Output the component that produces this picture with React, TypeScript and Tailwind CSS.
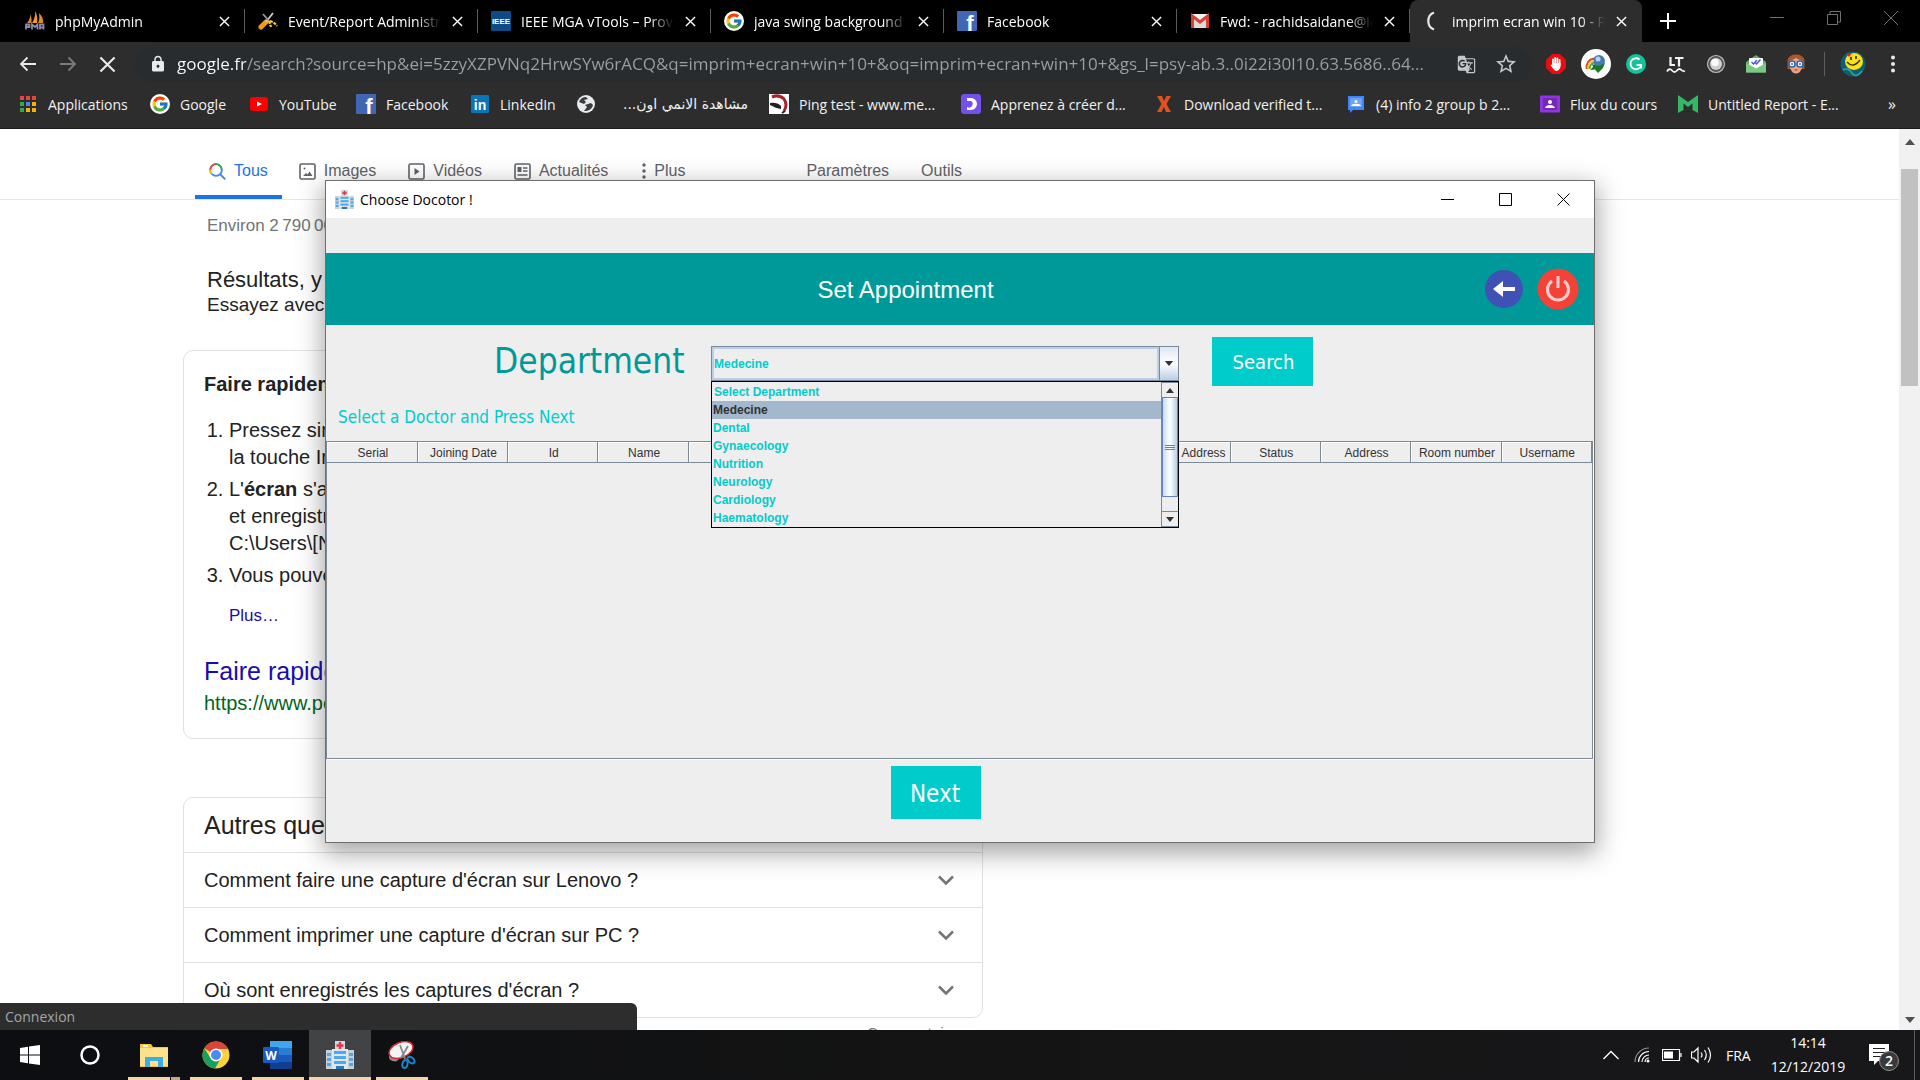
import type { ReactNode } from "react";
import { FcGoogle } from "react-icons/fc";
import { MdGTranslate, MdStarOutline, MdLock } from "react-icons/md";

type IconProps = { className?: string };

/* ---------- Site icons ---------- */

function PmaIcon() {
  return (
    <svg viewBox="0 0 20 20" className="size-5">
      <path d="M2 12 Q5 9 5.500 3 Q7 8 6.500 12Z" fill="#d98a2b" />
      <path d="M7 12 Q10 8 10.500 0 Q13 7 12 12Z" fill="#f39a2e" />
      <path d="M13 12 Q15 8 14 2 Q19 7 18 12Z" fill="#e08a25" />
      <path d="M1 18.500 V13.500 H4.500 V16 H1 M7 18.500 V13.500 L10 16 L12.500 13.500 V18.500 M15 18.500 V13.500 H18.500 V18.500 M15 16.500 H18" stroke="#8b8ab0" strokeWidth="1.800" fill="none" />
    </svg>
  );
}

function ToolsIcon() {
  return (
    <svg viewBox="0 0 20 20" className="size-5">
      <path d="M8 11 L3 16" stroke="#f49b16" strokeWidth="5" strokeLinecap="round" />
      <path d="M8 11 L15 2" stroke="#cfcfcf" strokeWidth="1.800" />
      <path d="M5 3 L11 10" stroke="#9a9a9a" strokeWidth="1.800" />
      <path d="M11 10 L13 16 M12 10 Q16 11 19 15" stroke="#f7d117" strokeWidth="2.200" fill="none" strokeDasharray="3 1" />
    </svg>
  );
}

function LetterTile({ fill, letter, size, x, y }: { fill: string; letter: string; size: number; x: number; y: number }) {
  return (
    <svg viewBox="0 0 20 20" className="size-5">
      <rect width="20" height="20" rx="1" fill={fill} />
      <text x={x} y={y} fontSize={size} fontWeight="bold" fill="#fff" textAnchor="middle" fontFamily="Liberation Sans, sans-serif">
        {letter}
      </text>
    </svg>
  );
}

const IeeeIcon = () => <LetterTile fill="#0d4a86" letter="IEEE" size={8} x={10} y={13} />;
const FacebookIcon = () => <LetterTile fill="#4267b2" letter="f" size={22} x={13} y={20} />;

function LinkedInIcon() {
  return (
    <svg viewBox="0 0 20 20" className="size-5">
      <rect x="1" y="1" width="18" height="18" rx="1" fill="#0a76b6" />
      <text x="10" y="15.500" fontSize="14" fontWeight="bold" fill="#fff" textAnchor="middle" fontFamily="Liberation Sans, sans-serif">
        in
      </text>
    </svg>
  );
}

function GmailIcon() {
  return (
    <svg viewBox="0 0 20 20" className="size-5">
      <rect x="1" y="3" width="18" height="14" rx="1" fill="#f2f2f2" />
      <path d="M4 17 V8 L10 12 L16 8 V17Z" fill="#dcdcdc" />
      <path d="M2.500 17 V5 L10 11 L17.500 5 V17" stroke="#d93f33" strokeWidth="3" fill="none" />
    </svg>
  );
}

function SpinnerIcon() {
  return (
    <svg viewBox="0 0 20 20" className="size-5">
      <path d="M12 1.500 A8.500 9 0 0 0 12 18.500" stroke="#e8e8e8" strokeWidth="2.200" fill="none" />
    </svg>
  );
}

function AppsIcon() {
  const colors = ["#e8443a", "#e8443a", "#e8443a", "#34a853", "#4285f4", "#f6b10b", "#34a853", "#f6b10b", "#f6b10b"];
  return (
    <svg viewBox="0 0 20 20" className="size-5">
      {colors.map((c, i) => (
        <rect key={i} x={2 + (i % 3) * 6} y={2 + Math.floor(i / 3) * 6} width="4" height="4" fill={c} />
      ))}
    </svg>
  );
}

function GoogleIcon() {
  return (
    <span className="flex size-5 items-center justify-center rounded-full bg-white">
      <FcGoogle className="size-[18px]" />
    </span>
  );
}

function YouTubeIcon() {
  return (
    <svg viewBox="0 0 20 20" className="size-5">
      <rect x="1" y="3" width="18" height="14" rx="3" fill="#f00" />
      <path d="M8 7.500 L13 10 L8 12.500Z" fill="#fff" />
    </svg>
  );
}

function GlobeIcon() {
  return (
    <svg viewBox="0 0 20 20" className="size-5">
      <circle cx="10" cy="10" r="9" fill="#e8eaed" />
      <path d="M10 3 Q5 3 3 8 L8 10 L10 8 L8 6 L12 5Z M8 17 L11 13 L9 11 L15 9 L17 11 Q16 16 10 17Z" fill="#3c3c3c" />
    </svg>
  );
}

function PingIcon() {
  return (
    <svg viewBox="0 0 20 20" className="size-5">
      <rect width="20" height="20" fill="#fff" />
      <path d="M3 3 Q10 0 15 5 Q19 11 15 17" stroke="#a8242c" strokeWidth="3" fill="none" />
      <path d="M1 9 Q8 8 12 12 L12 15 Q6 14 1 11Z" fill="#222" />
      <path d="M13 19 L16 17" stroke="#222" strokeWidth="2" />
    </svg>
  );
}

function MoonTileIcon() {
  return (
    <svg viewBox="0 0 20 20" className="size-5">
      <rect width="20" height="20" rx="3" fill="#7451eb" />
      <path d="M6 4 H10 A6 6 0 0 1 10 16 H6 V13 A3.500 3.500 0 0 0 10 7 H6Z" fill="#fff" />
    </svg>
  );
}

function CrossIcon() {
  return (
    <svg viewBox="0 0 20 20" className="size-5">
      <path d="M3 2 H8 L10 7 L12.500 2 H17 L12.500 10 L17 18 H12 L10 13 L7.500 18 H3 L7.500 10Z" fill="#e2501f" />
    </svg>
  );
}

function GroupsIcon() {
  return (
    <svg viewBox="0 0 20 20" className="size-5">
      <path d="M2 2 H18 V16 H7 L4 19 V16 H2Z" fill="#4285f4" />
      <rect x="4" y="4" width="12" height="9" fill="#6ba2fa" />
      <circle cx="10" cy="7.500" r="1.500" fill="#fff" />
      <path d="M5 12 H15 Q13 9 10 10 Q7 9 5 12Z" fill="#fff" />
    </svg>
  );
}

function ClassroomIcon() {
  return (
    <svg viewBox="0 0 20 20" className="size-5">
      <rect y="1.500" width="20" height="17" rx="1" fill="#8f36e0" />
      <rect x="3" y="4" width="14" height="12" fill="#7627bb" />
      <circle cx="10" cy="8" r="2" fill="#fff" />
      <path d="M5 14 Q6 11 10 11 Q14 11 15 14Z" fill="#fff" />
    </svg>
  );
}

function GreenMIcon() {
  return (
    <svg viewBox="0 0 20 20" className="size-5">
      <path d="M0 1 L10 8 L20 1 V19 L14.500 16 V9.500 L10 13 L5.500 9.500 V16 L0 19Z" fill="#35b765" />
    </svg>
  );
}

/* ---------- Extension icons ---------- */

function AdblockIcon() {
  return (
    <svg viewBox="0 0 20 20" className="size-5">
      <path d="M6 0 H14 L20 6 V14 L14 20 H6 L0 14 V6Z" fill="#e80d10" />
      <path d="M7 11 V5.500 M9.200 10 V3.800 M11.400 10 V4.300 M13.600 11 V6" stroke="#fff" strokeWidth="1.800" strokeLinecap="round" />
      <path d="M6 9 H14.500 V13 Q13 17 10 17 Q7.500 16 4.500 11 L5.500 10.500 L7 12Z" fill="#fff" />
    </svg>
  );
}

function IdmIcon() {
  return (
    <svg viewBox="0 0 30 30" className="size-[30px]">
      <circle cx="15" cy="15" r="15" fill="#fff" />
      <circle cx="18" cy="12" r="6" fill="#4879b8" />
      <circle cx="17" cy="10" r="2.500" fill="#b9d3ef" />
      <path d="M5.500 20 Q5 11 13 9.500" stroke="#d8452c" strokeWidth="1.800" fill="none" />
      <path d="M7 20 Q7 13 13 11.500" stroke="#f3c521" strokeWidth="1.800" fill="none" />
      <path d="M8.500 20 Q9 15 13 13.500" stroke="#4aa53a" strokeWidth="1.800" fill="none" />
      <path d="M11 15 L18 17 L24 14 L22 19 L17 24 L14 20.500 L9 21 L12 18Z" fill="#1c7a20" />
    </svg>
  );
}

function GrammarlyIcon() {
  return (
    <svg viewBox="0 0 20 20" className="size-5">
      <circle cx="10" cy="10" r="10" fill="#15c39a" />
      <path d="M13.500 5.500 A5.500 5.500 0 1 0 15 12 M10.500 11 H15 V14.500" stroke="#fff" strokeWidth="1.800" fill="none" />
    </svg>
  );
}

function LanguageToolIcon() {
  return (
    <svg viewBox="0 0 20 20" className="size-5">
      <path d="M4.500 3 V11 H9 M9 4 H17.500 M13 4 V12.500" stroke="#f3f3f3" strokeWidth="2.200" fill="none" />
      <path d="M1 17.500 Q3.500 13.500 6 16.500 T11 16.500 T16 16.500 L19 17.500" stroke="#f3f3f3" strokeWidth="1.800" fill="none" />
    </svg>
  );
}

function OrbIcon() {
  return (
    <svg viewBox="0 0 20 20" className="size-5">
      <circle cx="10" cy="10" r="8.500" fill="#555" stroke="#bbb" strokeWidth="1.200" />
      <circle cx="10" cy="10" r="6" fill="#cfcfcf" />
      <circle cx="9" cy="8.500" r="3.800" fill="#fafafa" />
    </svg>
  );
}

function MailTrackIcon() {
  return (
    <svg viewBox="0 0 20 20" className="size-5">
      <path d="M0 8 L10 1 L20 8 V18.500 H0Z" fill="#57b560" />
      <rect x="3" y="4" width="14" height="11" rx="1" fill="#fff" />
      <path d="M0 9 L10 14.500 L20 9 V17.500 Q20 18.500 19 18.500 H1 Q0 18.500 0 17.500Z" fill="#7cc983" />
      <path d="M5.500 8 L7.500 10 L11 6 M9.500 9 L10.500 10 L14.500 5.500" stroke="#4a4fd0" strokeWidth="1.400" fill="none" />
    </svg>
  );
}

function GlassesIcon() {
  return (
    <svg viewBox="0 0 20 20" className="size-5">
      <path d="M1.500 15 V6 Q3 0.500 10 0.500 Q17 0.500 18.500 6 V15Z" fill="#a9572b" />
      <path d="M4 7 L10 4 L16 7 V14 Q14 19.500 10 19.500 Q6 19.500 4 14Z" fill="#eba182" />
      <circle cx="6" cy="10" r="3" fill="#fff" stroke="#2a67b5" strokeWidth="1.600" />
      <circle cx="14" cy="10" r="3" fill="#fff" stroke="#2a67b5" strokeWidth="1.600" />
      <circle cx="6" cy="10" r="1" fill="#2a67b5" />
      <circle cx="14" cy="10" r="1" fill="#2a67b5" />
      <path d="M8.500 16 H11.500" stroke="#b4413b" strokeWidth="1.200" />
    </svg>
  );
}

function AvatarIcon() {
  return (
    <svg viewBox="0 0 26 26" className="size-[26px]">
      <circle cx="13" cy="13" r="12.500" fill="#0f5f72" />
      <path d="M3 19 Q8 16 12 22 T22 20" stroke="#2fa1ad" strokeWidth="1.500" fill="none" />
      <ellipse cx="14" cy="10.500" rx="9" ry="8.500" fill="#f7e21c" />
      <path d="M6 2 L12 2 L9 6Z" fill="#c7291e" />
      <path d="M11 6 V9 M16 5 V8" stroke="#3a2a00" strokeWidth="1.600" />
      <path d="M7 11 Q13 18 20 9" stroke="#3a2a00" strokeWidth="1.300" fill="none" />
    </svg>
  );
}

/* ---------- Generic glyphs ---------- */

function Cross({ className }: IconProps) {
  return (
    <svg viewBox="0 0 12 12" className={className}>
      <path d="M1 1 L11 11 M11 1 L1 11" stroke="currentColor" strokeWidth="1.500" />
    </svg>
  );
}

function Arrow({ className }: IconProps) {
  return (
    <svg viewBox="0 0 18 16" className={className}>
      <path d="M17 8 H2 M8.500 1.500 L2 8 L8.500 14.500" stroke="currentColor" strokeWidth="1.800" fill="none" />
    </svg>
  );
}

function Triangle({ up, className }: { up?: boolean; className?: string }) {
  return (
    <svg viewBox="0 0 10 6" className={className}>
      <path d={up ? "M0 6 L5 0 L10 6Z" : "M0 0 H10 L5 6Z"} fill="currentColor" />
    </svg>
  );
}

function HospitalIcon({ className }: IconProps) {
  return (
    <svg viewBox="0 0 28 28" className={className}>
      <rect x="9" y="0" width="10" height="9" fill="#cfd8dc" />
      <path d="M14 1 V8 M10.500 4.500 H17.500" stroke="#e5344a" strokeWidth="2.400" />
      <rect x="0" y="9" width="28" height="19" fill="#c8d0d5" />
      <rect x="6" y="8" width="16" height="20" fill="#dfe6ea" />
      <g fill="#4fa8ec">
        <rect x="8" y="10" width="12" height="3" />
        <rect x="8" y="15" width="12" height="3" />
        <rect x="8" y="20" width="12" height="3" />
        <rect x="1" y="12" width="4" height="3" />
        <rect x="1" y="17" width="4" height="3" />
        <rect x="1" y="22" width="4" height="3" />
        <rect x="23" y="12" width="4" height="3" />
        <rect x="23" y="17" width="4" height="3" />
        <rect x="23" y="22" width="4" height="3" />
      </g>
      <rect x="10" y="25" width="8" height="3" fill="#2a7ab8" />
    </svg>
  );
}

/* ---------- Browser chrome ---------- */

const tabs: { title: string; icon: ReactNode; active?: boolean }[] = [
  { title: "phpMyAdmin", icon: <PmaIcon /> },
  { title: "Event/Report Administration", icon: <ToolsIcon /> },
  { title: "IEEE MGA vTools – Providing", icon: <IeeeIcon /> },
  { title: "java swing background image", icon: <GoogleIcon /> },
  { title: "Facebook", icon: <FacebookIcon /> },
  { title: "Fwd: - rachidsaidane@ieee.org", icon: <GmailIcon /> },
  { title: "imprim ecran win 10 - Recherche", icon: <SpinnerIcon />, active: true },
];

function TabStrip() {
  return (
    <div className="flex h-[42px] bg-black pl-3 text-white">
      {tabs.map((t) => (
        <div
          key={t.title}
          className={
            t.active
              ? "flex w-[232px] items-center rounded-t-lg bg-[#2d2d2d] px-3"
              : "flex w-[233px] items-center pl-[13px]"
          }
        >
          <span className="shrink-0">{t.icon}</span>
          <span className="ml-2.5 w-[156px] overflow-hidden whitespace-nowrap text-[14px] [mask-image:linear-gradient(to_right,#000_82%,transparent_98%)]">
            {t.title}
          </span>
          <button aria-label="Close tab" className="ml-2 shrink-0">
            <Cross className="size-[11px]" />
          </button>
          {!t.active && <span className="ml-auto h-6 w-px bg-[#5a5a5a]" />}
        </div>
      ))}
      <button aria-label="New tab" className="ml-[18px] flex items-center">
        <svg viewBox="0 0 16 16" className="size-4">
          <path d="M8 0 V16 M0 8 H16" stroke="#fff" strokeWidth="2" />
        </svg>
      </button>
      <div className="ml-auto flex items-start gap-[43px] pr-[22px] pt-[11px] text-[#707070]">
        <button aria-label="Minimize">
          <svg viewBox="0 0 14 14" className="size-3.5"><path d="M0 6.500 H14" stroke="currentColor" /></svg>
        </button>
        <button aria-label="Restore">
          <svg viewBox="0 0 14 14" className="size-3.5" fill="none" stroke="currentColor">
            <path d="M0.500 3.500 H10.500 V13.500 H0.500Z M3 3 V0.500 H13.500 V11 H11" />
          </svg>
        </button>
        <button aria-label="Close">
          <svg viewBox="0 0 14 14" className="size-3.5"><path d="M0 0 L14 14 M14 0 L0 14" stroke="currentColor" /></svg>
        </button>
      </div>
    </div>
  );
}

const extensions: { name: string; icon: ReactNode }[] = [
  { name: "AdBlock", icon: <AdblockIcon /> },
  { name: "Download manager", icon: <IdmIcon /> },
  { name: "Grammar", icon: <GrammarlyIcon /> },
  { name: "Language tool", icon: <LanguageToolIcon /> },
  { name: "Orb", icon: <OrbIcon /> },
  { name: "Mail tracker", icon: <MailTrackIcon /> },
  { name: "Reader", icon: <GlassesIcon /> },
];

const url =
  "google.fr/search?source=hp&ei=5zzyXZPVNq2HrwSYw6rACQ&q=imprim+ecran+win+10+&oq=imprim+ecran+win+10+&gs_l=psy-ab.3..0i22i30l10.63.5686..64...";

function Toolbar() {
  return (
    <div className="flex h-[44px] items-center bg-[#2d2d2d] pl-[19px] pr-[25px] text-[#e8eaed]">
      <button aria-label="Back"><Arrow className="h-4 w-[18px]" /></button>
      <button aria-label="Forward" className="ml-[22px] text-[#7b7b7b]"><Arrow className="h-4 w-[18px] rotate-180" /></button>
      <button aria-label="Stop" className="ml-[22px]"><Cross className="size-[17px]" /></button>
      <div className="ml-[19px] flex h-[35px] flex-1 items-center rounded-full bg-[#282c2f] pl-3.5 pr-3.5">
        <MdLock className="size-[18px] shrink-0" />
        {/* The host is white, the rest of the address grey. */}
        <input
          type="text"
          aria-label="Address"
          defaultValue={url}
          className="ml-2.5 min-w-0 flex-1 bg-[linear-gradient(to_right,#fff_69px,#9aa0a6_69px)] bg-clip-text text-[17px] leading-6 text-transparent outline-none"
        />
        <button aria-label="Translate" className="text-[#c4c7ca]"><MdGTranslate className="size-[19px]" /></button>
        <button aria-label="Bookmark" className="ml-[18px] text-[#c4c7ca]"><MdStarOutline className="size-6" /></button>
      </div>
      <div className="ml-1 flex">
        {extensions.map((e) => (
          <button key={e.name} aria-label={e.name} className="flex w-10 items-center justify-center">
            {e.icon}
          </button>
        ))}
      </div>
      <span className="ml-2 h-6 w-px bg-[#5f5f5f]" />
      <button aria-label="Profile" className="ml-[15px]"><AvatarIcon /></button>
      <button aria-label="Menu" className="ml-[25px]">
        <svg viewBox="0 0 4 18" className="h-[18px] w-1" fill="#e8eaed">
          <circle cx="2" cy="2.500" r="2" /><circle cx="2" cy="9" r="2" /><circle cx="2" cy="15.500" r="2" />
        </svg>
      </button>
    </div>
  );
}

const bookmarks: { label: string; icon: ReactNode; width: string; rtl?: boolean }[] = [
  { label: "Applications", icon: <AppsIcon />, width: "w-[132px]" },
  { label: "Google", icon: <GoogleIcon />, width: "w-[99px]" },
  { label: "YouTube", icon: <YouTubeIcon />, width: "w-[107px]" },
  { label: "Facebook", icon: <FacebookIcon />, width: "w-[114px]" },
  { label: "LinkedIn", icon: <LinkedInIcon />, width: "w-[106px]" },
  { label: "مشاهدة الانمي اون...", icon: <GlobeIcon />, width: "w-[193px]", rtl: true },
  { label: "Ping test - www.me...", icon: <PingIcon />, width: "w-[192px]" },
  { label: "Apprenez à créer d...", icon: <MoonTileIcon />, width: "w-[193px]" },
  { label: "Download verified t...", icon: <CrossIcon />, width: "w-[192px]" },
  { label: "(4) info 2 group b 2...", icon: <GroupsIcon />, width: "w-[194px]" },
  { label: "Flux du cours", icon: <ClassroomIcon />, width: "w-[138px]" },
  { label: "Untitled Report - E...", icon: <GreenMIcon />, width: "w-[170px]" },
];

function BookmarkBar() {
  return (
    <div className="flex h-[43px] items-center border-b border-[#1c1c1c] bg-[#2d2d2d] pb-1.5 pl-[18px] pr-6 text-[14px] text-[#f1f1f1]">
      {bookmarks.map((b) => (
        <a key={b.label} href="#" className={`flex shrink-0 items-center gap-2.5 whitespace-nowrap ${b.width}`}>
          <span className="shrink-0">{b.icon}</span>
          {b.rtl ? (
            <span dir="rtl" className="ml-auto pr-[21px] font-['DejaVu_Sans',sans-serif]">{b.label}</span>
          ) : (
            <span>{b.label}</span>
          )}
        </a>
      ))}
      <button aria-label="More bookmarks" className="ml-auto text-[16px]">»</button>
    </div>
  );
}

/* ---------- Search page ---------- */

function NavLink({ label, icon }: { label: string; icon: ReactNode }) {
  return (
    <a href="#" className="flex items-center gap-2 px-4 pb-4">
      {icon}
      <span>{label}</span>
    </a>
  );
}

function SearchNav() {
  return (
    <nav className="flex items-end border-b border-[#e6e6e6] pl-[195px] pt-[30px] text-[16px] leading-6 text-[#5f6368]">
      <a href="#" className="mr-px flex items-center gap-2 border-b-4 border-[#1a73e8] px-3.5 pb-3 text-[#1a73e8]">
        <svg viewBox="0 0 17 17" className="size-[17px]" fill="none" strokeWidth="1.800">
          <circle cx="7" cy="7" r="5.800" stroke="#4285f4" />
          <path d="M3 11.200 A5.800 5.800 0 0 1 1.300 6" stroke="#fbbc04" />
          <path d="M1.300 6.500 A5.800 5.800 0 0 1 7 1.200" stroke="#ea4335" />
          <path d="M7 1.200 A5.800 5.800 0 0 1 12.800 7" stroke="#34a853" />
          <path d="M11 11 L16.300 16.300" stroke="#4285f4" />
        </svg>
        <span>Tous</span>
      </a>
      <NavLink
        label="Images"
        icon={
          <svg viewBox="0 0 17 17" className="size-[17px]" fill="none" stroke="#5f6368" strokeWidth="1.600">
            <rect x="1" y="1" width="15" height="15" rx="1.500" />
            <circle cx="5.500" cy="5.500" r="1" fill="#5f6368" stroke="none" />
            <path d="M4 13 L7 10 L8.500 11.500 L10.500 8.500 L13.500 13Z" fill="#5f6368" stroke="none" />
          </svg>
        }
      />
      <NavLink
        label="Vidéos"
        icon={
          <svg viewBox="0 0 17 17" className="size-[17px]">
            <rect x="1" y="1" width="15" height="15" rx="1.500" fill="none" stroke="#5f6368" strokeWidth="1.600" />
            <path d="M6.500 5 L11.500 8.500 L6.500 12Z" fill="#5f6368" />
          </svg>
        }
      />
      <NavLink
        label="Actualités"
        icon={
          <svg viewBox="0 0 17 17" className="size-[17px]">
            <rect x="1" y="1" width="15" height="15" rx="1.500" fill="none" stroke="#5f6368" strokeWidth="1.600" />
            <rect x="3.500" y="4" width="4" height="5" fill="#5f6368" />
            <path d="M9 5 H13.500 M9 8 H13.500 M3.500 12 H13.500" stroke="#5f6368" strokeWidth="1.600" />
          </svg>
        }
      />
      <a href="#" className="flex items-center gap-1.5 pb-4 pl-4">
        <svg viewBox="0 0 8 16" className="h-4 w-2" fill="#5f6368">
          <circle cx="4" cy="2" r="1.700" /><circle cx="4" cy="8" r="1.700" /><circle cx="4" cy="14" r="1.700" />
        </svg>
        <span>Plus</span>
      </a>
      <a href="#" className="ml-[121px] pb-4">Paramètres</a>
      <a href="#" className="ml-8 pb-4">Outils</a>
    </nav>
  );
}

const questions = [
  "Comment faire une capture d'écran sur Lenovo ?",
  "Comment imprimer une capture d'écran sur PC ?",
  "Où sont enregistrés les captures d'écran ?",
];

function SearchPage() {
  return (
    <div className="min-w-0 flex-1 font-['Liberation_Sans',Arial,sans-serif] text-[#222]">
      <SearchNav />
      <div className="ml-[207px] whitespace-nowrap">
        <p className="mt-3.5 text-[17px] leading-6 text-[#70757a]">Environ 2&#8239;790&#8239;000 résultats</p>
        <p className="mt-7 text-[22px] leading-[27px]">Résultats, y compris</p>
        <p className="text-[19px] leading-6">Essayez avec l'orthographe</p>
      </div>
      <section className="ml-[183px] mt-[33px] w-[800px] overflow-hidden whitespace-nowrap rounded-[10px] border border-[#dfe1e5] px-5 pb-[21px] pt-5 text-[20px] leading-[27px]">
        <h2 className="font-bold">Faire rapidement</h2>
        <ol className="ml-[25px] mt-[19px] flex list-outside list-decimal flex-col gap-[5px]">
          <li>Pressez simultanément<br />la touche Impr écran</li>
          <li>L'<b>écran</b> s'affiche<br />et enregistrez<br />C:\Users\[Nom]</li>
          <li>Vous pouvez</li>
        </ol>
        <a href="#" className="ml-[25px] mt-[15px] block text-[17px] leading-6 text-[#1a0dab]">Plus…</a>
        <a href="#" className="mt-7 block text-[25px] leading-[30px] text-[#1a0dab]">Faire rapidement</a>
        <a href="#" className="mt-1 block text-[#006621]">https://www.pc</a>
      </section>
      <section className="ml-[183px] mt-[58px] w-[800px] rounded-[10px] border border-[#dfe1e5]">
        <h2 className="flex h-[54px] items-center px-5 pt-0.5 text-[25px]">Autres questions</h2>
        {questions.map((q) => (
          <button key={q} className="flex h-[55px] w-full items-center justify-between border-t border-[#dfe1e5] pl-5 pr-7 text-[20px]">
            <span>{q}</span>
            <svg viewBox="0 0 16 10" className="h-2.5 w-4">
              <path d="M1 1.500 L8 8.500 L15 1.500" stroke="#70757a" strokeWidth="2.500" fill="none" />
            </svg>
          </button>
        ))}
      </section>
      <p className="ml-[867px] mt-[5px] text-[15px] leading-5 text-[#70757a]">Commentaires</p>
    </div>
  );
}

function PageScrollbar() {
  return (
    <div className="flex w-[21px] flex-col items-center bg-[#f1f1f1] text-[#505050]">
      <Triangle up className="mt-2.5 h-[6px] w-2.5" />
      <div className="mt-6 h-[217px] w-[17px] bg-[#c1c1c1]" />
      <Triangle className="mb-[7px] mt-auto h-[6px] w-2.5" />
    </div>
  );
}

/* ---------- Appointment window ---------- */

const departments = ["Select Department", "Medecine", "Dental", "Gynaecology", "Nutrition", "Neurology", "Cardiology", "Haematology"];

const columns = ["Serial", "Joining Date", "Id", "Name", "", "", "", "", "", "Address", "Status", "Address", "Room number", "Username"];

function DepartmentSelect() {
  return (
    <div className="relative mt-[21px] w-[468px]">
      <div className="flex h-[35px] border border-[#7a8a99] bg-[#eee]">
        <select
          id="department"
          defaultValue="Medecine"
          className="min-w-0 flex-1 appearance-none border-2 border-[#b8cfe5] text-[12px] font-bold text-[#00cccc]"
        >
          {departments.map((d) => (
            <option key={d}>{d}</option>
          ))}
        </select>
        <span className="flex w-[19px] items-center justify-center border-l border-[#7a8a99] bg-linear-to-b from-[#dde8f3] via-white to-[#b8cfe5] text-[#333]">
          <Triangle className="h-[5px] w-2.5" />
        </span>
      </div>
      <div className="absolute left-0 right-0 top-full z-10 flex border border-black bg-[#eee]">
        <ul role="listbox" aria-label="Department options" className="flex-1 text-[12px] font-bold leading-[18px] text-[#00cccc]">
          {departments.map((d) => (
            <li
              key={d}
              role="option"
              aria-selected={d === "Medecine"}
              className={d === "Medecine" ? "bg-[#a3b8cc] pl-px text-[#333]" : "pl-px first:pl-0.5 first:pt-px"}
            >
              {d}
            </li>
          ))}
        </ul>
        <div className="flex w-[17px] flex-col border-l border-t border-[#7a8a99] text-[#333]">
          <div className="flex h-[14px] items-center justify-center"><Triangle up className="h-[5px] w-2" /></div>
          <div className="flex h-[100px] flex-col items-center justify-center gap-px border border-[#6382bf] bg-linear-to-r from-[#c8dbee] via-white to-[#b8cfe5]">
            <span className="h-px w-2.5 bg-[#6382bf]" />
            <span className="h-px w-2.5 bg-[#6382bf]" />
            <span className="h-px w-2.5 bg-[#6382bf]" />
          </div>
          <div className="flex-1" />
          <div className="flex h-4 items-center justify-center border-b border-t border-[#7a8a99]"><Triangle className="h-[5px] w-2" /></div>
        </div>
      </div>
    </div>
  );
}

function AppointmentWindow() {
  return (
    <div className="absolute left-[325px] right-[325px] top-[51px] border border-[#6e6e6e] bg-[#eee] shadow-[0_8px_24px_2px_rgba(0,0,0,0.36)]">
      <header className="flex h-[37px] items-center bg-white pl-[9px] pr-6 text-black">
        <HospitalIcon className="size-[19px]" />
        <h1 className="ml-1.5 text-[14px]">Choose Docotor !</h1>
        <div className="ml-auto flex items-center gap-[45px]">
          <button aria-label="Minimize window">
            <svg viewBox="0 0 13 13" className="size-[13px]"><path d="M0 6.500 H13" stroke="#000" /></svg>
          </button>
          <button aria-label="Maximize window">
            <svg viewBox="0 0 13 13" className="size-[13px]"><path d="M0.500 0.500 H12.500 V12.500 H0.500Z" stroke="#000" fill="none" /></svg>
          </button>
          <button aria-label="Close window">
            <svg viewBox="0 0 13 13" className="size-[13px]"><path d="M0.500 0.500 L12.500 12.500 M12.500 0.500 L0.500 12.500" stroke="#000" /></svg>
          </button>
        </div>
      </header>
      <div className="mt-[35px] flex h-[72px] items-center gap-3.5 bg-[#009999] pl-3.5 pr-[15px]">
        <h2 className="flex-1 pt-0.5 text-center font-['Liberation_Sans',Arial,sans-serif] text-[24px] text-white">Set Appointment</h2>
        <button aria-label="Back to previous screen">
          <svg viewBox="0 0 38 38" className="size-[38px]">
            <circle cx="19" cy="19" r="19" fill="#3f51b5" />
            <path d="M8 19 L18 11 V17 H30 V21 H18 V27Z" fill="#fff" />
          </svg>
        </button>
        <button aria-label="Log out">
          <svg viewBox="0 0 42 42" className="size-[42px]">
            <circle cx="21" cy="21" r="20.500" fill="#f44336" />
            <path d="M15 13 A10.500 10.500 0 1 0 27 13" stroke="#ffcdd2" strokeWidth="3" fill="none" />
            <path d="M21 8 V20" stroke="#ffcdd2" strokeWidth="3" />
          </svg>
        </button>
      </div>
      <div className="flex h-[80px] items-start font-['DejaVu_Sans_Condensed','Noto_Sans',sans-serif]">
        <label htmlFor="department" className="ml-[168px] mt-3.5 w-[217px] text-[35px] leading-[44px] text-[#009999]">Department</label>
        <div className="font-['Liberation_Sans',Arial,sans-serif]"><DepartmentSelect /></div>
        <button className="ml-[33px] mt-3 h-[49px] w-[101px] bg-[#00cccc] pl-0.5 text-[20px] text-white">Search</button>
      </div>
      <p className="ml-3 font-['DejaVu_Sans_Condensed','Noto_Sans',sans-serif] text-[17px] leading-6 text-[#00cccc]">Select a Doctor and Press Next</p>
      <div className="mr-px mt-3 h-[318px] border border-[#7a8a99] font-['Liberation_Sans',Arial,sans-serif] shadow-[1px_1px_0_#fff]">
        <table className="w-full table-fixed border-collapse text-[12px] text-[#333]">
          <thead>
            <tr className="h-5">
              {columns.map((c, i) => (
                <th
                  key={i}
                  className={
                    i === 9
                      ? "border-b border-r border-[#7a8a99] pr-1 pt-0.5 text-right font-normal shadow-[inset_1px_1px_0_#fff]"
                      : "whitespace-nowrap border-b border-r border-[#7a8a99] pl-0.5 pt-0.5 text-center font-normal shadow-[inset_1px_1px_0_#fff]"
                  }
                >
                  {c}
                </th>
              ))}
            </tr>
          </thead>
          <tbody />
        </table>
      </div>
      <div className="flex h-[83px] justify-center pr-12 pt-[7px]">
        <button className="h-[53px] w-[90px] bg-[#00cccc] pr-0.5 pt-0.5 font-['DejaVu_Sans_Condensed','Noto_Sans',sans-serif] text-[24px] text-white">Next</button>
      </div>
    </div>
  );
}

/* ---------- Taskbar ---------- */

const taskApps: { name: string; icon: ReactNode; active?: boolean; stacked?: boolean }[] = [
  {
    name: "File explorer",
    stacked: true,
    icon: (
      <svg viewBox="0 0 28 28" className="size-7">
        <path d="M0 3 H11 L13 6 H28 V26 H0Z" fill="#f8c53a" />
        <rect x="0" y="7" width="28" height="18" fill="#fde28a" />
        <rect x="3" y="4" width="5" height="2" fill="#fff" />
        <path d="M5 26 V16 H23 V26 H18 V20 H10 V26Z" fill="#3aaee6" />
      </svg>
    ),
  },
  {
    name: "Chrome",
    icon: (
      <svg viewBox="0 0 28 28" className="size-7">
        <circle cx="14" cy="14" r="13.500" fill="#fdd23e" />
        <path d="M14 14 L2.300 7.200 A13.500 13.500 0 0 1 25.700 7.200 L26 8 H14Z" fill="#dc4437" />
        <path d="M2.300 7.200 A13.500 13.500 0 0 0 13 27.500 L19 17 L14 14 L8.500 17Z" fill="#1a9e5c" />
        <circle cx="14" cy="14" r="6.500" fill="#fff" />
        <circle cx="14" cy="14" r="5" fill="#4a8af4" />
      </svg>
    ),
  },
  {
    name: "Word",
    icon: (
      <svg viewBox="0 0 30 28" className="h-7 w-[30px]">
        <rect x="7" y="0" width="22" height="7" fill="#41a5ee" />
        <rect x="7" y="7" width="22" height="7" fill="#2b7cd3" />
        <rect x="7" y="14" width="22" height="7" fill="#185abd" />
        <rect x="7" y="21" width="22" height="7" fill="#103f91" />
        <rect x="0" y="6" width="16" height="16" rx="1" fill="#185abd" />
        <text x="8" y="18.500" fontSize="12" fontWeight="bold" fill="#fff" textAnchor="middle" fontFamily="Open Sans, sans-serif">W</text>
      </svg>
    ),
  },
  { name: "Appointment", icon: <HospitalIcon className="size-7" />, active: true },
  {
    name: "Snipping tool",
    icon: (
      <svg viewBox="0 0 28 28" className="size-7">
        <path d="M1 15 Q0 20 8 20.500 L15 15Z" fill="#8d8d8d" />
        <ellipse cx="13" cy="9" rx="12.500" ry="7.500" transform="rotate(-22 13 9)" fill="#f4f4f4" stroke="#d7262c" strokeWidth="1.500" />
        <path d="M12 4 L17 18 M20 5 L13 17" stroke="#888" strokeWidth="1.800" />
        <ellipse cx="17" cy="23" rx="2.500" ry="4" transform="rotate(15 17 23)" fill="none" stroke="#1c82cc" strokeWidth="2" />
        <ellipse cx="23" cy="19" rx="2.500" ry="4" transform="rotate(-50 23 19)" fill="none" stroke="#1c82cc" strokeWidth="2" />
      </svg>
    ),
  },
];

function Taskbar() {
  return (
    <footer className="flex h-[50px] shrink-0 bg-linear-to-r from-[#0c0e12] via-[#141414] to-[#18181b] text-white">
      <button aria-label="Start" className="flex w-[60px] items-center justify-center">
        <svg viewBox="0 0 20 20" className="size-5" fill="#fff">
          <path d="M0 3 L8 1.800 V9.500 H0Z M9 1.600 L20 0 V9.500 H9Z M0 10.500 H8 V18.200 L0 17Z M9 10.500 H20 V20 L9 18.400Z" />
        </svg>
      </button>
      <button aria-label="Cortana" className="flex w-[60px] items-center justify-center">
        <svg viewBox="0 0 20 20" className="size-5"><circle cx="10" cy="10" r="8.500" stroke="#fff" strokeWidth="2.500" fill="none" /></svg>
      </button>
      <div className="ml-[3px] flex">
        {taskApps.map((a) => (
          <button
            key={a.name}
            aria-label={a.name}
            className={a.active ? "flex w-[62px] flex-col bg-[#424345]" : "flex w-[62px] flex-col px-[5px]"}
          >
            <span className="flex w-full flex-1 items-center justify-center pt-[3px]">{a.icon}</span>
            <span className="flex h-[3px] w-full bg-[#fbd3a3]">
              {a.stacked && <span className="ml-auto w-2.5 border-l border-black bg-[#c5a784]" />}
            </span>
          </button>
        ))}
      </div>
      <div className="ml-auto flex items-center">
        <button aria-label="Hidden icons">
          <svg viewBox="0 0 16 10" className="h-2.5 w-4"><path d="M0.500 9 L8 1.500 L15.500 9" stroke="#fff" strokeWidth="1.300" fill="none" /></svg>
        </button>
        <svg viewBox="0 0 16 16" className="ml-[15px] size-4" fill="none" stroke="#fff" strokeWidth="1.200">
          <path d="M1 15 A14 14 0 0 1 15 1" stroke="#8f8f8f" />
          <path d="M4.500 15 A10.500 10.500 0 0 1 15 4.500 M8 15 A7 7 0 0 1 15 8 M11 15 A4 4 0 0 1 15 11" />
          <circle cx="14" cy="14" r="1.500" fill="#fff" stroke="none" />
        </svg>
        <svg viewBox="0 0 20 12" className="ml-3 h-3 w-5">
          <path d="M0.500 0.500 H17.500 V11.500 H0.500Z M19 4 V8" stroke="#fff" fill="none" strokeWidth="1.200" />
          <rect x="2" y="2.500" width="9" height="7" fill="#fff" />
        </svg>
        <svg viewBox="0 0 21 18" className="ml-[9px] h-[18px] w-[21px]" fill="none" stroke="#fff" strokeWidth="1.200">
          <path d="M0.500 6 H3 L7 2 V16 L3 12 H0.500Z M10 6.500 Q12 9 10 11.500 M13.500 4 Q17 9 13.500 14" />
          <path d="M17 1.500 Q22 9 17 16.500" />
        </svg>
        <span className="ml-3.5 w-[26px] text-[14px]">FRA</span>
        <time className="ml-[17px] flex w-[78px] flex-col items-center text-[14px] leading-6">
          <span>14:14</span>
          <span>12/12/2019</span>
        </time>
        <button aria-label="Notifications" className="ml-[22px]">
          <svg viewBox="0 0 31 32" className="h-8 w-[31px]">
            <path d="M0 5 H20 V22 H9 L5 26 V22 H0Z" fill="#fff" />
            <path d="M4 9.500 H16 M4 13.500 H16 M4 17.500 H12" stroke="#222" strokeWidth="1.200" />
            <circle cx="20" cy="22" r="9.500" fill="#3a3a3c" stroke="#8d8d8d" />
            <text x="20" y="27" fontSize="14" fontWeight="600" fill="#fff" textAnchor="middle" fontFamily="Open Sans, sans-serif">2</text>
          </svg>
        </button>
        <span className="ml-3.5 mr-[5px] h-[50px] w-px bg-[#5c5c5e]" />
      </div>
    </footer>
  );
}

export default function App() {
  return (
    <div className="flex h-screen flex-col overflow-hidden bg-white font-['Open_Sans','Noto_Sans',sans-serif]">
      <TabStrip />
      <Toolbar />
      <BookmarkBar />
      <main className="relative flex min-h-0 flex-1">
        <div className="flex min-w-0 flex-1 overflow-hidden">
          <SearchPage />
          <PageScrollbar />
        </div>
        <AppointmentWindow />
        <div className="absolute bottom-0 left-0 flex h-[27px] w-[33.2%] items-center rounded-tr-md bg-[#2d2d2d] pl-[5px] text-[14px] text-[#a3a6a9]">
          Connexion
        </div>
      </main>
      <Taskbar />
    </div>
  );
}
